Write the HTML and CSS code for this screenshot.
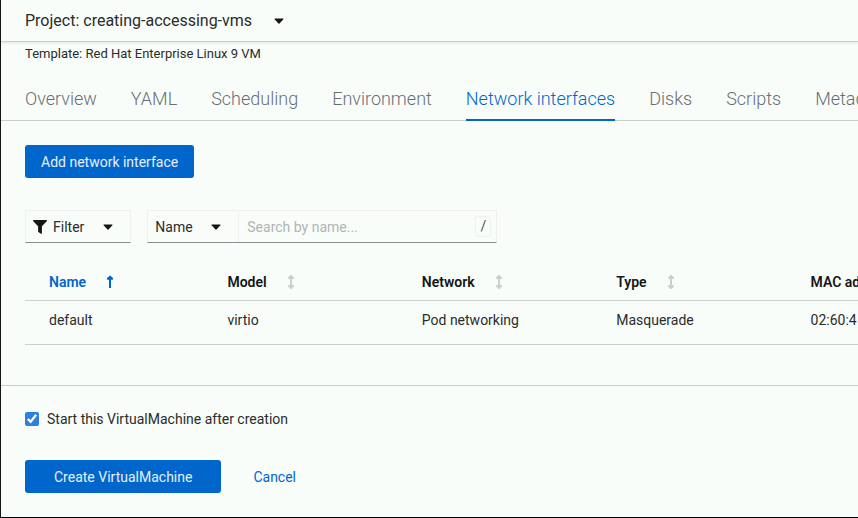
FILE: index.html
```html
<!DOCTYPE html>
<html lang="en">
<head>
<meta charset="utf-8">
<title>Create VirtualMachine</title>
<meta name="viewport" content="width=device-width, initial-scale=1">
<link rel="stylesheet" href="styles.css">
</head>
<body>
<div class="page">
  <header class="project-bar">
    <button class="project-toggle" type="button">Project: creating-accessing-vms
      <svg class="caret" viewBox="0 0 10 6" aria-hidden="true"><path d="M.8.4h8.4q.7.3.2.9L5.5 5.5q-.5.5-1 0L.6 1.3Q.1.7.8.4z"/></svg>
    </button>
  </header>
  <p class="template">Template: Red Hat Enterprise Linux 9 VM</p>
  <nav class="tabs">
    <a class="tab" href="#overview">Overview</a>
    <a class="tab" href="#yaml">YAML</a>
    <a class="tab" href="#scheduling">Scheduling</a>
    <a class="tab" href="#environment">Environment</a>
    <a class="tab tab-current" href="#network" aria-current="page">Network interfaces</a>
    <a class="tab" href="#disks">Disks</a>
    <a class="tab" href="#scripts">Scripts</a>
    <a class="tab" href="#metadata">Metadata</a>
  </nav>
  <main class="content">
    <button class="button" type="button">Add network interface</button>
    <div class="toolbar">
      <button class="filter" type="button">
        <svg class="funnel" viewBox="0 0 14 14" aria-hidden="true"><path d="M.6 0h12.8q.9.5.3 1.2L8.9 6.3v7q-.3.9-1 .5L5.4 12q-.3-.2-.3-.6V6.3L.3 1.2Q-.3.5.6 0z"/></svg>
        <span>Filter</span>
        <svg class="caret" viewBox="0 0 10 6" aria-hidden="true"><path d="M.8.4h8.4q.7.3.2.9L5.5 5.5q-.5.5-1 0L.6 1.3Q.1.7.8.4z"/></svg>
      </button>
      <div class="search">
        <div class="select-wrap">
          <select class="select" aria-label="Search attribute"><option>Name</option></select>
          <svg class="caret" viewBox="0 0 10 6" aria-hidden="true"><path d="M.8.4h8.4q.7.3.2.9L5.5 5.5q-.5.5-1 0L.6 1.3Q.1.7.8.4z"/></svg>
        </div>
        <input class="search-input" type="text" placeholder="Search by name..." aria-label="Search by name">
        <kbd class="key">/</kbd>
      </div>
    </div>
    <table class="table">
      <thead>
        <tr>
          <th class="sorted"><button class="sort" type="button">Name <svg class="arrow" viewBox="0 0 8 14" aria-hidden="true"><path d="M4 1.2v11.8M1.800 3.800 4 1.600l2.200 2.200z"/></svg></button></th>
          <th><button class="sort" type="button">Model <svg class="arrow" viewBox="0 0 8 14" aria-hidden="true"><path d="M4 2v10M2 3 4 1l2 2zM2 11 4 13l2-2z"/></svg></button></th>
          <th><button class="sort" type="button">Network <svg class="arrow" viewBox="0 0 8 14" aria-hidden="true"><path d="M4 2v10M2 3 4 1l2 2zM2 11 4 13l2-2z"/></svg></button></th>
          <th><button class="sort" type="button">Type <svg class="arrow" viewBox="0 0 8 14" aria-hidden="true"><path d="M4 2v10M2 3 4 1l2 2zM2 11 4 13l2-2z"/></svg></button></th>
          <th><button class="sort" type="button">MAC address</button></th>
        </tr>
      </thead>
      <tbody>
        <tr><td>default</td><td>virtio</td><td>Pod networking</td><td>Masquerade</td><td>02:60:4</td></tr>
      </tbody>
    </table>
  </main>
  <footer class="footer">
    <label class="start"><input class="checkbox" type="checkbox" checked><span>Start this VirtualMachine after creation</span></label>
    <div class="actions">
      <button class="button button-wide" type="button">Create VirtualMachine</button>
      <a class="cancel" href="#cancel">Cancel</a>
    </div>
  </footer>
</div>
</body>
</html>
```
FILE: styles.css
```css
* { box-sizing: border-box; }

body {
  margin: 0;
  background: #f8fdfa;
  color: #2a2c2b;
  font: 14px/20px Roboto, "Noto Sans", sans-serif;
}

button, input, select, kbd { font: inherit; color: inherit; }
button { cursor: pointer; }

.page {
  display: flow-root;
  min-height: 100vh;
  border-left: 1px solid #151515;
  border-bottom: 1px solid #000;
  overflow: hidden;
}

.caret { width: 10px; height: 6px; fill: #151515; flex: none; }

.project-bar {
  padding: 8px 24px;
  border-bottom: 1px solid #cbd0cd;
  box-shadow: 0 1px 2px #dfe4e1;
}

.project-toggle {
  display: flex;
  align-items: center;
  gap: 22px;
  padding: 0;
  border: 0;
  background: none;
  font-size: 16px;
  line-height: 25px;
}

.template { margin: 2px 24px 0; font-size: 13px; }

.tabs {
  display: flex;
  gap: 34px;
  margin-top: 16px;
  padding: 0 24px;
  box-shadow: inset 0 -1px #cbd0cd;
}

.tab {
  flex: none;
  padding: 9px 0 10px;
  border-bottom: 2px solid transparent;
  color: #6a6e73;
  font-size: 18px;
  font-weight: 350;
  line-height: 20px;
  text-decoration: none;
}

.tab-current { border-color: #06c; color: #06c; }

.content { padding: 24px 0 40px 24px; }

.button {
  padding: 7px 16px 5px;
  border: 0;
  border-radius: 3px;
  background: #06c;
  color: #e6f0fa;
  line-height: 21px;
}

.toolbar { display: flex; gap: 16px; margin-top: 32px; }

.filter, .search {
  height: 33px;
  border: 1px solid #f0f0f0;
  border-bottom-color: #8a8d90;
  background: none;
}

.filter {
  display: flex;
  align-items: center;
  padding: 0 17px 0 7px;
}

.filter .caret { margin-left: 19px; }
.funnel { width: 14px; height: 14px; margin-right: 6px; fill: #151515; }

.search { display: flex; align-items: center; width: 350px; }

.select-wrap {
  display: flex;
  align-items: center;
  align-self: stretch;
  width: 91px;
  border-right: 1px solid #f0f0f0;
}

.select {
  appearance: none;
  width: 100%;
  height: 100%;
  padding: 0 24px 0 7px;
  border: 0;
  background: none;
}

.select-wrap .caret { margin-left: -27px; margin-right: 17px; pointer-events: none; }

.search-input {
  flex: 1;
  min-width: 0;
  height: 100%;
  padding: 0 8px;
  border: 0;
  background: none;
}

.search-input::placeholder { color: #b1b4b2; opacity: 1; }

.key {
  width: 16px;
  margin-right: 5px;
  border: 1px solid #f0f0f0;
  border-radius: 3px;
  color: #4f5255;
  line-height: 19px;
  text-align: center;
}

.table {
  width: 100%;
  min-width: 972px;
  margin-top: 20px;
  border-collapse: collapse;
  table-layout: fixed;
}

th, td {
  border-bottom: 1px solid #cbd0cd;
  padding: 9px 8px 8px;
  text-align: left;
}

th { color: #151515; }
th:first-child, td:first-child { padding-left: 24px; }
td { padding: 10px 8px 14px; line-height: 19px; }

.sort {
  display: flex;
  align-items: center;
  gap: 20px;
  padding: 0;
  border: 0;
  background: none;
  font-weight: 600;
}

.arrow { width: 8px; height: 14px; fill: #cbd0cd; stroke: #cbd0cd; stroke-width: 2; stroke-linejoin: round; }
.sorted { color: #06c; }
.sorted .arrow { fill: #06c; stroke: #06c; }

.footer { padding: 23px 24px 24px; border-top: 1px solid #cbd0cd; }

.start { display: flex; align-items: center; gap: 8px; width: fit-content; }

.checkbox { width: 14px; height: 14px; margin: 0; accent-color: #2b80e0; }

.actions { display: flex; align-items: center; gap: 32px; margin-top: 31px; }

.button-wide { padding-left: 29px; padding-right: 29px; }
.cancel { color: #06c; text-decoration: none; }
```
